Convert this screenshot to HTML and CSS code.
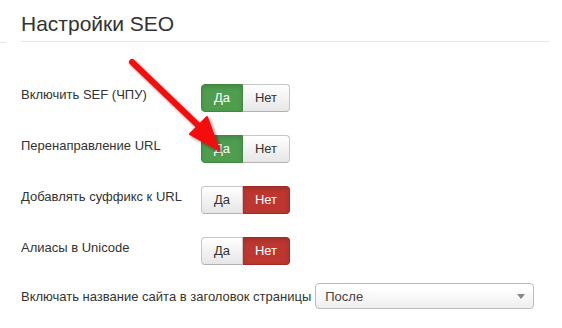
FILE: index.html
```html
<!DOCTYPE html>
<html>
<head>
<meta charset="utf-8">
<link rel="stylesheet" href="styles.css">
</head>
<body>
<div class="edge-line"></div>
<div class="page">
  <h1 class="title">Настройки SEO</h1>
  <div class="rows">
    <div class="row">
      <div class="label">Включить SEF (ЧПУ)</div>
      <div class="toggle">
        <span class="btn yes on">Да</span><span class="btn no">Нет</span>
      </div>
    </div>
    <div class="row">
      <div class="label">Перенаправление URL</div>
      <div class="toggle">
        <span class="btn yes on">Да</span><span class="btn no">Нет</span>
      </div>
    </div>
    <div class="row">
      <div class="label">Добавлять суффикс к URL</div>
      <div class="toggle">
        <span class="btn yes">Да</span><span class="btn no on">Нет</span>
      </div>
    </div>
    <div class="row">
      <div class="label">Алиасы в Unicode</div>
      <div class="toggle">
        <span class="btn yes">Да</span><span class="btn no on">Нет</span>
      </div>
    </div>
  </div>
  <div class="select-row">
    <span class="select-label">Включать название сайта в заголовок страницы</span>
    <div class="select"><span>После</span><span class="caret"></span></div>
  </div>
</div>
<svg class="arrow" width="562" height="328" viewBox="0 0 562 328">
  <defs>
    <filter id="sh" x="-20%" y="-20%" width="140%" height="140%">
      <feGaussianBlur in="SourceAlpha" stdDeviation="1.5"/>
      <feOffset dx="2" dy="2" result="b"/>
      <feComponentTransfer><feFuncA type="linear" slope="0.45"/></feComponentTransfer>
      <feMerge><feMergeNode/><feMergeNode in="SourceGraphic"/></feMerge>
    </filter>
  </defs>
  <g filter="url(#sh)">
    <line x1="132" y1="62" x2="203" y2="130" stroke="#f30d0d" stroke-width="6" stroke-linecap="round"/>
    <path d="M219 150 L190 134 L207 117 Z" fill="#f30d0d" stroke="#f30d0d" stroke-width="2" stroke-linejoin="round"/>
  </g>
</svg>
</body>
</html>
```

FILE: styles.css
```css
html, body {
  margin: 0;
  padding: 0;
  background: #fff;
}
body {
  font-family: "Liberation Sans", Arial, sans-serif;
  font-size: 13px;
  color: #333;
  width: 562px;
  height: 328px;
  position: relative;
  overflow: hidden;
}
.edge-line {
  position: absolute;
  left: 0;
  top: 42px;
  width: 6px;
  height: 1px;
  background: #e5e5e5;
}
.page {
  padding: 0 13px 0 21px;
}
.title {
  margin: 0;
  padding-top: 11px;
  height: 30px;
  font-size: 21px;
  font-weight: normal;
  line-height: 26px;
  color: #333;
  border-bottom: 1px solid #e5e5e5;
}
.rows {
  display: flex;
  flex-direction: column;
  gap: 23px;
  padding-top: 42px;
}
.row {
  display: flex;
  align-items: flex-start;
  height: 28px;
}
.label {
  width: 180px;
  line-height: 18px;
  padding-top: 2px;
}
.toggle {
  display: flex;
}
.btn {
  box-sizing: border-box;
  height: 28px;
  line-height: 26px;
  text-align: center;
  font-size: 13px;
  border: 1px solid #c5c5c5;
  border-bottom-color: #b3b3b3;
  background: linear-gradient(#ffffff, #e6e6e6);
  color: #333;
  box-shadow: inset 0 1px 0 rgba(255,255,255,.2);
}
.btn.yes {
  width: 42px;
  border-radius: 4px 0 0 4px;
}
.btn.no {
  width: 47px;
  border-left: 0;
  border-radius: 0 4px 4px 0;
}
.btn.yes.on {
  background: #4f9d4f;
  border-color: #3d8a3d;
  color: #fff;
  box-shadow: inset 0 2px 4px rgba(0,0,0,.15);
}
.btn.no.on {
  background: #bd362f;
  border-color: #a32b25;
  color: #fff;
  box-shadow: inset 0 2px 4px rgba(0,0,0,.15);
}
.select-row {
  display: flex;
  align-items: center;
  margin-top: 18px;
  height: 26px;
}
.select-label {
  margin-right: 4px;
}
.select {
  box-sizing: border-box;
  width: 219px;
  height: 26px;
  border: 1px solid #bbb;
  border-radius: 4px;
  background: linear-gradient(#ffffff 20%, #eeeeee);
  display: flex;
  align-items: center;
  justify-content: space-between;
  padding: 0 8px 0 9px;
  color: #444;
}
.caret {
  width: 0;
  height: 0;
  border-left: 4px solid transparent;
  border-right: 4px solid transparent;
  border-top: 5px solid #888;
}
.arrow {
  position: absolute;
  left: 0;
  top: 0;
  pointer-events: none;
}
```
